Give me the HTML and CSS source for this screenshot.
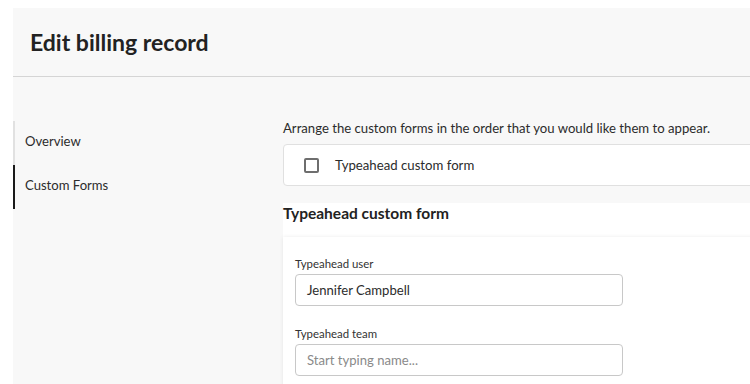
FILE: index.html
```html
<!DOCTYPE html>
<html>
<head>
<meta charset="utf-8">
<link rel="stylesheet" href="styles.css">
</head>
<body>
<div class="page">
  <header class="header">
    <h1 class="title">Edit billing record</h1>
  </header>
  <div class="main">
    <nav class="nav">
      <div class="nav-item">Overview</div>
      <div class="nav-item active">Custom Forms</div>
    </nav>
    <section class="content">
      <p class="intro">Arrange the custom forms in the order that you would like them to appear.</p>
      <div class="form-list">
        <span class="checkbox"></span>
        <span class="form-list-label">Typeahead custom form</span>
      </div>
      <div class="form-section">
        <h2 class="section-title">Typeahead custom form</h2>
        <div class="card">
          <div class="field">
            <label class="field-label">Typeahead user</label>
            <div class="input">Jennifer Campbell</div>
          </div>
          <div class="field">
            <label class="field-label">Typeahead team</label>
            <div class="input placeholder">Start typing name...</div>
          </div>
        </div>
      </div>
    </section>
  </div>
</div>
</body>
</html>
```

FILE: styles.css
```css
html, body {
  margin: 0;
  padding: 0;
  background: #ffffff;
  overflow: hidden;
  height: 384px;
}
body {
  font-family: Lato, "Open Sans", sans-serif;
  color: #2c2c2c;
}
.page {
  margin: 8px 0 0 13px;
  background: #f8f8f8;
  height: 376px;
  overflow: hidden;
}
.header {
  height: 68px;
  border-bottom: 1px solid #d5d5d5;
  display: flex;
  align-items: center;
  padding-left: 17px;
}
.title {
  margin: 0;
  font-size: 23px;
  font-weight: 700;
  color: #222222;
}
.main {
  display: flex;
}
.nav {
  width: 270px;
  flex: none;
  padding-top: 44px;
}
.nav-item {
  height: 44px;
  display: flex;
  align-items: center;
  padding-left: 10px;
  border-left: 2px solid #e1e1e1;
  font-size: 13.1px;
  color: #2c2c2c;
  padding-bottom: 4px;
  box-sizing: border-box;
}
.nav-item.active {
  border-left-color: #1a1a1a;
}
.content {
  width: 480px;
  flex: none;
  padding-top: 42px;
}
.intro {
  margin: 0 0 7px 0;
  font-size: 13.15px;
  line-height: 18px;
  color: #2c2c2c;
}
.form-list {
  height: 40px;
  background: #ffffff;
  border: 1px solid #e0e0e0;
  border-radius: 4px;
  display: flex;
  align-items: center;
  padding-left: 20px;
}
.checkbox {
  width: 11px;
  height: 11px;
  border: 2px solid #6e6e6e;
  border-radius: 2px;
  margin-right: 16px;
}
.form-list-label {
  font-size: 13.2px;
  color: #2c2c2c;
}
.form-section {
  margin-top: 17px;
  background: #ffffff;
}
.section-title {
  margin: 0;
  height: 34px;
  font-size: 15.5px;
  font-weight: 700;
  line-height: 21px;
  color: #222222;
}
.card {
  background: #ffffff;
  box-shadow: 0 0 4px rgba(0, 0, 0, 0.08);
  padding: 19px 12px 10px 12px;
}
.field {
  display: flex;
  flex-direction: column;
  margin-bottom: 20px;
}
.field-label {
  font-size: 11.4px;
  line-height: 16px;
  color: #333333;
  margin-bottom: 2px;
}
.input {
  width: 304px;
  height: 30px;
  border: 1px solid #c8c8c8;
  border-radius: 4px;
  padding: 0 11px;
  display: flex;
  align-items: center;
  font-size: 13.1px;
  color: #2c2c2c;
}
.input.placeholder {
  color: #8a8a8a;
}
```
